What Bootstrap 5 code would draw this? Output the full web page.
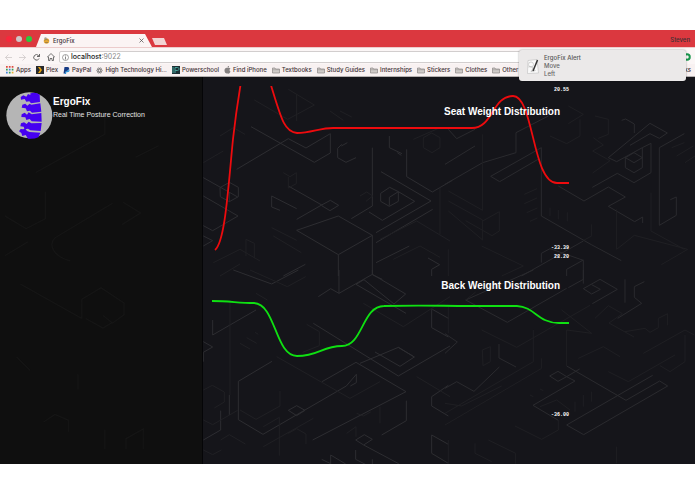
<!DOCTYPE html>
<html lang="en">
<head>
<meta charset="utf-8">
<meta name="viewport" content="width=device-width, initial-scale=1">
<title>ErgoFix</title>
<link href="https://cdn.jsdelivr.net/npm/bootstrap@5.3.0/dist/css/bootstrap.min.css" rel="stylesheet">
<style>
  body { font: 6px/8px Inter, "Open Sans", sans-serif; color: #3c3034; background: #fff; padding: 30px 0; }
  svg { display: block; flex: none; }
  button, a { font: inherit; color: inherit; text-decoration: none; }
  button { border: 0; padding: 0; background: none; }
  .titlebar { background: #db383f; height: 17px; padding: 4px 5px 0 6px; }
  .lights { gap: 4px; padding: 2px 0 0 0; }
  .light { width: 6px; height: 6px; border-radius: 50%; }
  .tab-shape { width: 116px; height: 13px; background: #fbf4f4; clip-path: polygon(0 100%, 5px 0, 109px 0, 100% 100%); padding: 0 8px 0 7px; gap: 3px; font-weight: 500; }
  .newtab { width: 15px; height: 7px; background: #f2d3d3; clip-path: polygon(0 0, 12px 0, 100% 100%, 3px 100%); }
  .profile { padding-top: 2px; font-weight: 500; }
  .toolbar { background: #fbf6f6; padding: 3px 5px 1px 5px; gap: 7px; border-top: 1px solid #eccccc; }
  .toolbar button { width: 7px; }
  .address { height: 12px; border: 1px solid #d2cece; border-radius: 2px; background: #fff; padding: 0 2px; gap: 2px; margin-left: -2px; }
  .address input { position: absolute; inset: 0; width: 100%; border: 0; padding: 0; background: transparent; color: transparent; font: inherit; }
  .address-text { font-size: 7px; color: #888; }
  .address-text b { color: #222; font-weight: 500; }
  .bookmarks { background: #f8f1f1; height: 13px; padding: 0 4px 0 6px; border-bottom: 1px solid #b4b0b0; gap: 5px; }
  .bookmarks a { display: flex; align-items: center; gap: 2px; white-space: nowrap; font-weight: 500; }
  .alert-box { position: absolute; z-index: 3; right: 9px; top: 50px; width: 167px; background: #ebe9e9; border-radius: 3px; padding: 4px 6px 3px 7px; gap: 5px; color: #666; box-shadow: 0 0 2px #0006; font-weight: 500; }
  .alert-box strong { font-weight: 500; color: #555; }
  .ergo { background: #15151a; font-family: "Liberation Sans", Arial, sans-serif; color: #fff; }
  .side { flex: 0 0 203px; background: #0f0f0f; border-right: 1px solid #050507; padding: 15px 5px; gap: 0; }
  .side h1 { font-size: 10px; line-height: 12px; font-weight: 700; margin: 0; padding: 4px 0 2px; }
  .side p { font-size: 7px; line-height: 10px; margin: 0; color: #e4e4e4; }
  .stage { display: grid; }
  .stage > * { grid-area: 1 / 1; min-width: 0; }
  .backdrop { width: 100%; height: 100%; }
  .charts { padding: 9px 8px; }
  .chart { display: grid; max-width: 360px; margin: 0; }
  .chart > * { grid-area: 1 / 1; }
  .chart svg { width: 100%; }
  .chart h2 { font-size: 10px; line-height: 12px; font-weight: 700; margin: 0; padding: 20px 11px 0 0; text-align: right; }
  .chart-two h2 { padding-top: 27px; }
  .limits { font: bold 5px/9px "Liberation Mono", monospace; text-align: right; padding-right: 2px; }
</style>
<script src="https://cdn.jsdelivr.net/npm/bootstrap@5.3.0/dist/js/bootstrap.bundle.min.js"></script>
</head>
<body class="d-flex flex-column min-vh-100 position-relative">
<svg width="0" height="0" class="position-absolute" aria-hidden="true"><symbol id="folder" viewBox="0 0 16 14"><path d="M1 12V2h5l1 2h8v8z" fill="#cfcbc8" stroke="#8c8887" stroke-width="1.4"/><path d="M1 5.500h14" stroke="#8c8887"/></symbol></svg>

<header>
  <div class="titlebar d-flex">
    <div class="lights d-flex">
      <span class="light" style="background:#f8273c"></span><span class="light" style="background:#cfc6c8"></span><span class="light" style="background:#2bc840"></span>
    </div>
    <div class="tab-shape d-flex align-items-center ms-1">
      <svg width="7" height="7" viewBox="0 0 14 14"><circle cx="7" cy="8" r="5.500" fill="#e6a936"/><circle cx="5" cy="3" r="2.500" fill="#a7a293"/><path d="M3 7c3-3 6-2 8 0M4 11h6" stroke="#8f7545" stroke-width="1.500" fill="none"/></svg>
      <span class="flex-grow-1">ErgoFix</span>
      <button aria-label="Close tab"><svg width="5" height="5" viewBox="0 0 10 10" stroke="#555" stroke-width="1.500"><path d="M1 1l8 8M9 1L1 9"/></svg></button>
    </div>
    <button class="newtab mt-1" aria-label="New tab"></button>
    <span class="profile ms-auto">Steven</span>
  </div>
  <nav class="toolbar d-flex align-items-center">
    <button aria-label="Back"><svg width="7" height="7" viewBox="0 0 14 14" fill="none" stroke="#ccc6c6" stroke-width="1.500"><path d="M14 7H1M7 1L1 7l6 6"/></svg></button>
    <button aria-label="Forward"><svg width="7" height="7" viewBox="0 0 14 14" fill="none" stroke="#ccc6c6" stroke-width="1.500"><path d="M0 7h13M7 1l6 6-6 6"/></svg></button>
    <button aria-label="Reload"><svg width="7" height="7" viewBox="0 0 14 14" fill="none" stroke="#555" stroke-width="1.800"><path d="M12 9A5.500 5.500 0 1 1 11 3l2 2M13 0v5H8"/></svg></button>
    <button aria-label="Home"><svg width="8" height="8" viewBox="0 0 16 16" fill="none" stroke="#555" stroke-width="1.600"><path d="M1 8l7-7 7 7h-2v7h-3v-4H6v4H3V8z"/></svg></button>
    <div class="address d-flex align-items-center flex-grow-1">
      <svg width="7" height="7" viewBox="0 0 14 14" fill="none" stroke="#666" stroke-width="1.200"><circle cx="7" cy="7" r="6"/><path d="M7 6v5M7 3v2" stroke-width="1.600"/></svg>
      <label class="position-relative flex-grow-1 address-text"><b>localhost</b>:9022<input type="text" aria-label="Address"></label>
    </div>
    <button aria-label="Extension"><svg width="8" height="8" viewBox="0 0 16 16"><circle cx="8" cy="8" r="5.500" fill="none" stroke="#16964b" stroke-width="4"/></svg></button>
  </nav>
  <nav class="bookmarks d-flex align-items-center" aria-label="Bookmarks">
    <a href="#"><svg width="8" height="8" viewBox="0 0 14 14"><path d="M0 0h3v3H0zM5 0h3v3H5zM10 0h3v3h-3z" fill="#dd4c40"/><path d="M0 5h3v3H0zM10 5h3v3h-3zM5 10h3v3H5z" fill="#32a05a"/><path d="M5 5h3v3H5zM0 10h3v3H0z" fill="#4a86dc"/><path d="M10 10h3v3h-3z" fill="#e6b233"/></svg>Apps</a>
    <a href="#"><svg width="8" height="8" viewBox="0 0 16 16"><path d="M0 0h16v16H0z" fill="#282a2d"/><path d="M4 2h4l4 6-4 6H4l4-6z" fill="#e5a00d"/></svg>Plex</a>
    <a href="#"><svg width="7" height="7" viewBox="0 0 14 14"><path d="M3 0h6c3 0 4 2 3 4-1 3-3 4-6 4l-1 5H1z" fill="#173b84"/><path d="M6 8c4 0 6-2 6-4 3 5-1 7-5 6l-1 4H3z" fill="#2b93d7"/></svg>PayPal</a>
    <a href="#"><svg width="7" height="7" viewBox="0 0 14 14" fill="none" stroke="#777" stroke-width="1.300"><ellipse cx="7" cy="7" rx="6" ry="2.500"/><ellipse cx="7" cy="7" rx="6" ry="2.500" transform="rotate(60 7 7)"/><ellipse cx="7" cy="7" rx="6" ry="2.500" transform="rotate(120 7 7)"/></svg>High Technology Hi...</a>
    <a href="#"><svg width="8" height="8" viewBox="0 0 16 16"><path d="M0 0h16v16H0z" fill="#1c3035"/><path d="M6 14V3h5c4 0 4 6 0 6H6" fill="none" stroke="#48a29b" stroke-width="2"/><path d="M2 2v12" stroke="#48a29b" stroke-width="2"/></svg>Powerschool</a>
    <a href="#"><svg width="7" height="8" viewBox="0 0 14 16" fill="#858181"><path d="M7 4c2-1 4-1 6 1-3 2-2 5 0 6-1 3-3 5-6 4-3 1-6-2-6-6 0-4 3-6 6-5zM7 3c0-2 1-3 3-3 0 2-1 3-3 3z"/></svg>Find iPhone</a>
    <a href="#"><svg width="8" height="7"><use href="#folder"/></svg>Textbooks</a>
    <a href="#"><svg width="8" height="7"><use href="#folder"/></svg>Study Guides</a>
    <a href="#"><svg width="8" height="7"><use href="#folder"/></svg>Internships</a>
    <a href="#"><svg width="8" height="7"><use href="#folder"/></svg>Stickers</a>
    <a href="#"><svg width="8" height="7"><use href="#folder"/></svg>Clothes</a>
    <a href="#"><svg width="8" height="7"><use href="#folder"/></svg>Other</a>
    <a href="#" class="ms-auto">ks</a>
  </nav>
</header>

<div class="alert-box d-flex align-items-center" role="status">
  <svg width="13" height="17" viewBox="0 0 26 34"><path d="M4 5l18-2 3 27-22 1z" fill="#fafafa" stroke="#b5b5b5"/><circle cx="10" cy="13" r="5" fill="none" stroke="#d2d2d2" stroke-width="2"/><path d="M5 18c8-3 11 3 5 9l9-2" fill="none" stroke="#c4c4c4" stroke-width="2"/><path d="M23 4L14 26" stroke="#333" stroke-width="3"/></svg>
  <div><strong class="d-block">ErgoFix Alert</strong><span class="d-block">Move</span><span class="d-block">Left</span></div>
</div>

<div class="ergo d-flex flex-grow-1">
  <aside class="side stage">
    <svg class="backdrop" viewBox="0 0 580 930" preserveAspectRatio="xMidYMid slice" fill="none" stroke="#161616" stroke-width="3" aria-hidden="true"><path d="M35 320l60 36 50-26v-70M120 210l180-100V50M170 380l150-90M170 380c-20 20 0 50 40 60M345 345l48-30-45-28M0 450l100-60M80 500l160 90M240 590v-50l50-30 60 40v30l-30 22-25-20M250 590l45 25 25-15M380 170l60-30M230 735v40M70 690l35 35M300 880v60l50 28 50-30v-60l-45 25v60M140 860l30-20 35 15v30"/></svg>
    <div class="d-flex align-items-start">
      <svg width="48" height="48" viewBox="0 0 144 144" role="img" aria-label="Spine">
        <circle cx="73" cy="70" r="69" fill="#b5b5b5"/>
        <g fill="#4600f0"><path d="M76 4q17-5 28 4l1 22-27 4-5-6-9 1-5-8-11 2-1-8 8-5 9 4 5-8 7 3z"/><path d="M79 38l27-4 3 25-28 3-6-6-9 2-4-9-12-2 2-9 9-3 6 6 7-6z"/><path d="M80 67l29-4 1 26-30-1-6-7-10 3-3-8-12-1 1-8 9-5 7 6 5-7z"/><path d="M79 94l31-1-3 24-31-2-7-5-10 2-3-8-10-1 2-9 9-3 8 5 6-7z"/><path d="M74 120l32 2-6 14q-14 6-31 4l-7-11-10 3-3-9-7-5 5-7 8 1 5-3 6 8z"/></g>
      </svg>
      <div><h1>ErgoFix</h1><p>Real Time Posture Correction</p></div>
    </div>
  </aside>

  <main class="stage flex-grow-1">
    <svg class="backdrop" viewBox="203 77 492 387" preserveAspectRatio="xMinYMin slice" fill="none" stroke="#2b2b2f" aria-hidden="true">
      <g transform="translate(200 76) scale(.33333)" stroke-width="3">
        <path d="M110 280L265 188l53 28 73-43v58l-48 28-190-107M425 205l-12 12v28l25 14 30-14M442 200l-18 10M568 180v35l38 18M592 230l12 8M517 215v175l-63 38M620 220v82l77 46 60-35M10 305l103 58M60 335l28-16 27 15v28l-27 15-27-15zM88 348v30M10 360l104 60-76 44-28-15M215 360v33l25 10M215 360l75 38M265 330l102 58M290 430l75-43 26-14 25 15-26 16-25-15M415 420l102 58-102 58-125-73zM415 536v64M517 478v118l30 14M528 470l165-95-150-88M528 500l170-100M542 352l27-18 26 13v29l-27 15-26-15zM568 364v25M568 364l27-17M595 347l49 29-97 57-40-25M10 480l28 14-28 16M250 600l66-35M528 560l100-50M695 600v-20l24-14-35-20" stroke="#2d2d31"/>
        <path d="M265 40l78 47-80 43-100-58M290 55v80M60 180l40-25 35 20M10 260l60-35M250 290l20 12 19-12v33l-24 13v-33M480 360l20-12 18 12-20 16M40 560l80-40 60 35M60 600l60-36M215 455l75 38M220 480l84 50M650 435l100 60M540 490l110-55M720 335v140M640 190l80-35M670 185l25-14 25 14v30l-24 15-26-15zM420 105l35 18M390 105l40 28M138 490l25 12v45M138 490v50M580 550l80-40 60 34" stroke="#202024"/>
      </g>
      <g transform="translate(445 76) scale(.33333)" stroke-width="3">
        <path d="M0 265l90-55M0 325l113-65 100-30v-60L310 120M490 245l125-103 52 29-24 16-28-14-60 35M490 245l25 12 77-42M592 215v60l-25 15-26-15v-30l26-15 25 15-25 15-26-15M592 215l26-13v88l-51 30-50-28-75 42M643 448V215l75-42M643 448l51-30v-55l-18 8M289 420V215L137 301l27 16 115-67M289 420l150 86 90 48M340 330l77 45 73-42 51 30-51 28 79 46 24-14v18M230 600l185-105M289 560v-28l26-14 100 35v70M365 600v-20l50-28M530 133l12-4 26 15v27M10 160l25 28 55-28" stroke="#2a2a2e"/>
        <path d="M315 180l50 23 40-23v-50M370 90l45 25-45 28M445 185l30 22-32 18 52 29-52 37M113 175v228L10 345M10 405l103 87v-60L10 375M113 435l50-28v58l-22 14-79-45M238 355l38-17M238 383l38-17M245 410l32-14M255 436l22-10M315 395v25M340 402v28M367 409v27M515 400v120l53-42 160 42-79 46M618 350v115l100 55M680 215l38-15M695 240l50-30M720 260l30-20M450 120l40 10v45l-30 12M10 600v-80M110 510l125 60-65 30M440 445v35l-24 13" stroke="#1f1f23"/>
      </g>
      <g transform="translate(200 270) scale(.33333)" stroke-width="3">
        <path d="M100 0l115 42 80-42M417 0v70L392 56l-37 24M417 70l100-57 100 59-35 30-90-73-24 14 150 87M517 0v13M695 118v55l50 28M697 118l50 28M38 195l130-75M38 195v-45M10 215l28 16-28 16v28M216 274l-101 60v115l74 44 250-145 30-35v25l-18 10M366 335l102-58 150 88-280 145M340 160l255 158 155-90M480 280l115-48 48 29-43 28-75-43M595 232l48 29M290 407l25 14-25 16-25-16zM62 422v58l-52 30M88 375v60M619 392v60l-74 43M695 495v55l50 30M695 495l50 28M695 380l50-34M695 380v28l50 30M467 510l26-16 24 14-26 17zM467 540v28l35 18M491 525l105 56M517 568v14M392 555v27M392 555l45 27M365 568l25 12" stroke="#2d2d31"/>
        <path d="M168 70l34 20M150 0l112 50 55-30M320 163l38 22v42l-50 20M120 220l30 17M140 203l30 17M165 187l10 6M10 360l27-14 36 20v30l-30 18M10 450l28 14 75-43M90 90v285M120 420l48 28 72-40v-45M230 260l220 125 90-50M190 470l48-28v115M265 490l25-14 28 16v30M10 540l28 14 26-14M62 510l26-16 48 28M470 430l20 8 22-12M440 490l28-20v30M190 530l150-85M490 100l120 70 140-90M540 410v50M650 320l100 60" stroke="#202024"/>
      </g>
      <g transform="translate(445 270) scale(.33333)" stroke-width="3">
        <path d="M415 0v28l-45 25M265 0L62 90l125 67 178-102M0 250l37-34-37-25M0 355l35-20 52 29 76-73M162 222v42M162 264l51 27M415 56l50-28 52 30-75 43M415 56l25 16 26-14-26-14M540 28v70M568 50v32l22 18-72 45M568 50l30-15M314 318l25-14 26 16-26 14zM365 320l39-23M365 320l25 13-126 73 76 45M365 288l178 103 101-58 24 15-252 146-51-29 258-149" stroke="#2a2a2e"/>
        <path d="M110 180l105 52 220-126M62 90l30-24M0 430l265-155v-95M0 465l290-170v-30M0 400l50 8 120-60M10 110v80M112 240l24-10v45l-22 12zM365 180v108M365 180l75 10-90-70M450 145l40-38 42 24-40 28 75 42M540 185l60-10 15 12 25-14v-28l28-14v35M595 250l125-70 28 15M720 195v80l-45 30-30-18M400 265l75-35 50 30M490 305l60 30 140-80M285 410l50-20 40 30M340 450v30l-50 28-80-40M10 510v70M90 520v30l50 25M130 510l82 40v32M255 375l10 5M285 357l10 5M390 395v30M415 375v35M440 365v30M515 530v50" stroke="#1f1f23"/>
      </g>
    </svg>
    <div class="charts">
      <figure class="chart">
        <svg viewBox="211 86 360 167" fill="none" stroke="#ed0b0e" stroke-width="1.800" role="img" aria-label="Seat weight over time"><path d="M215 250C225 242 228 190 233 139Q236 112 241 82M270 82C281 118 284 132 297 133C311 133 320 128 333 128H471C493 129 492 96 513 96C534 96 532 183 557 183H569"/></svg>
        <h2>Seat Weight Distribution</h2>
        <div class="limits d-flex flex-column justify-content-between"><span>20.55</span><span>-33.39</span></div>
      </figure>
      <figure class="chart chart-two">
        <svg viewBox="211 253 360 167" fill="none" stroke="#0fe012" stroke-width="1.800" role="img" aria-label="Back weight over time"><path d="M212 301C230 301 238 303 254 303C276 304 275 356 297 356C319 356 322 346 342 346C363 346 362 306 384 306C425 305 440 306 470 306H517C535 307 538 323 559 323H569"/></svg>
        <h2>Back Weight Distribution</h2>
        <div class="limits d-flex flex-column justify-content-between"><span>28.20</span><span>-36.00</span></div>
      </figure>
    </div>
  </main>
</div>
</body>
</html>
